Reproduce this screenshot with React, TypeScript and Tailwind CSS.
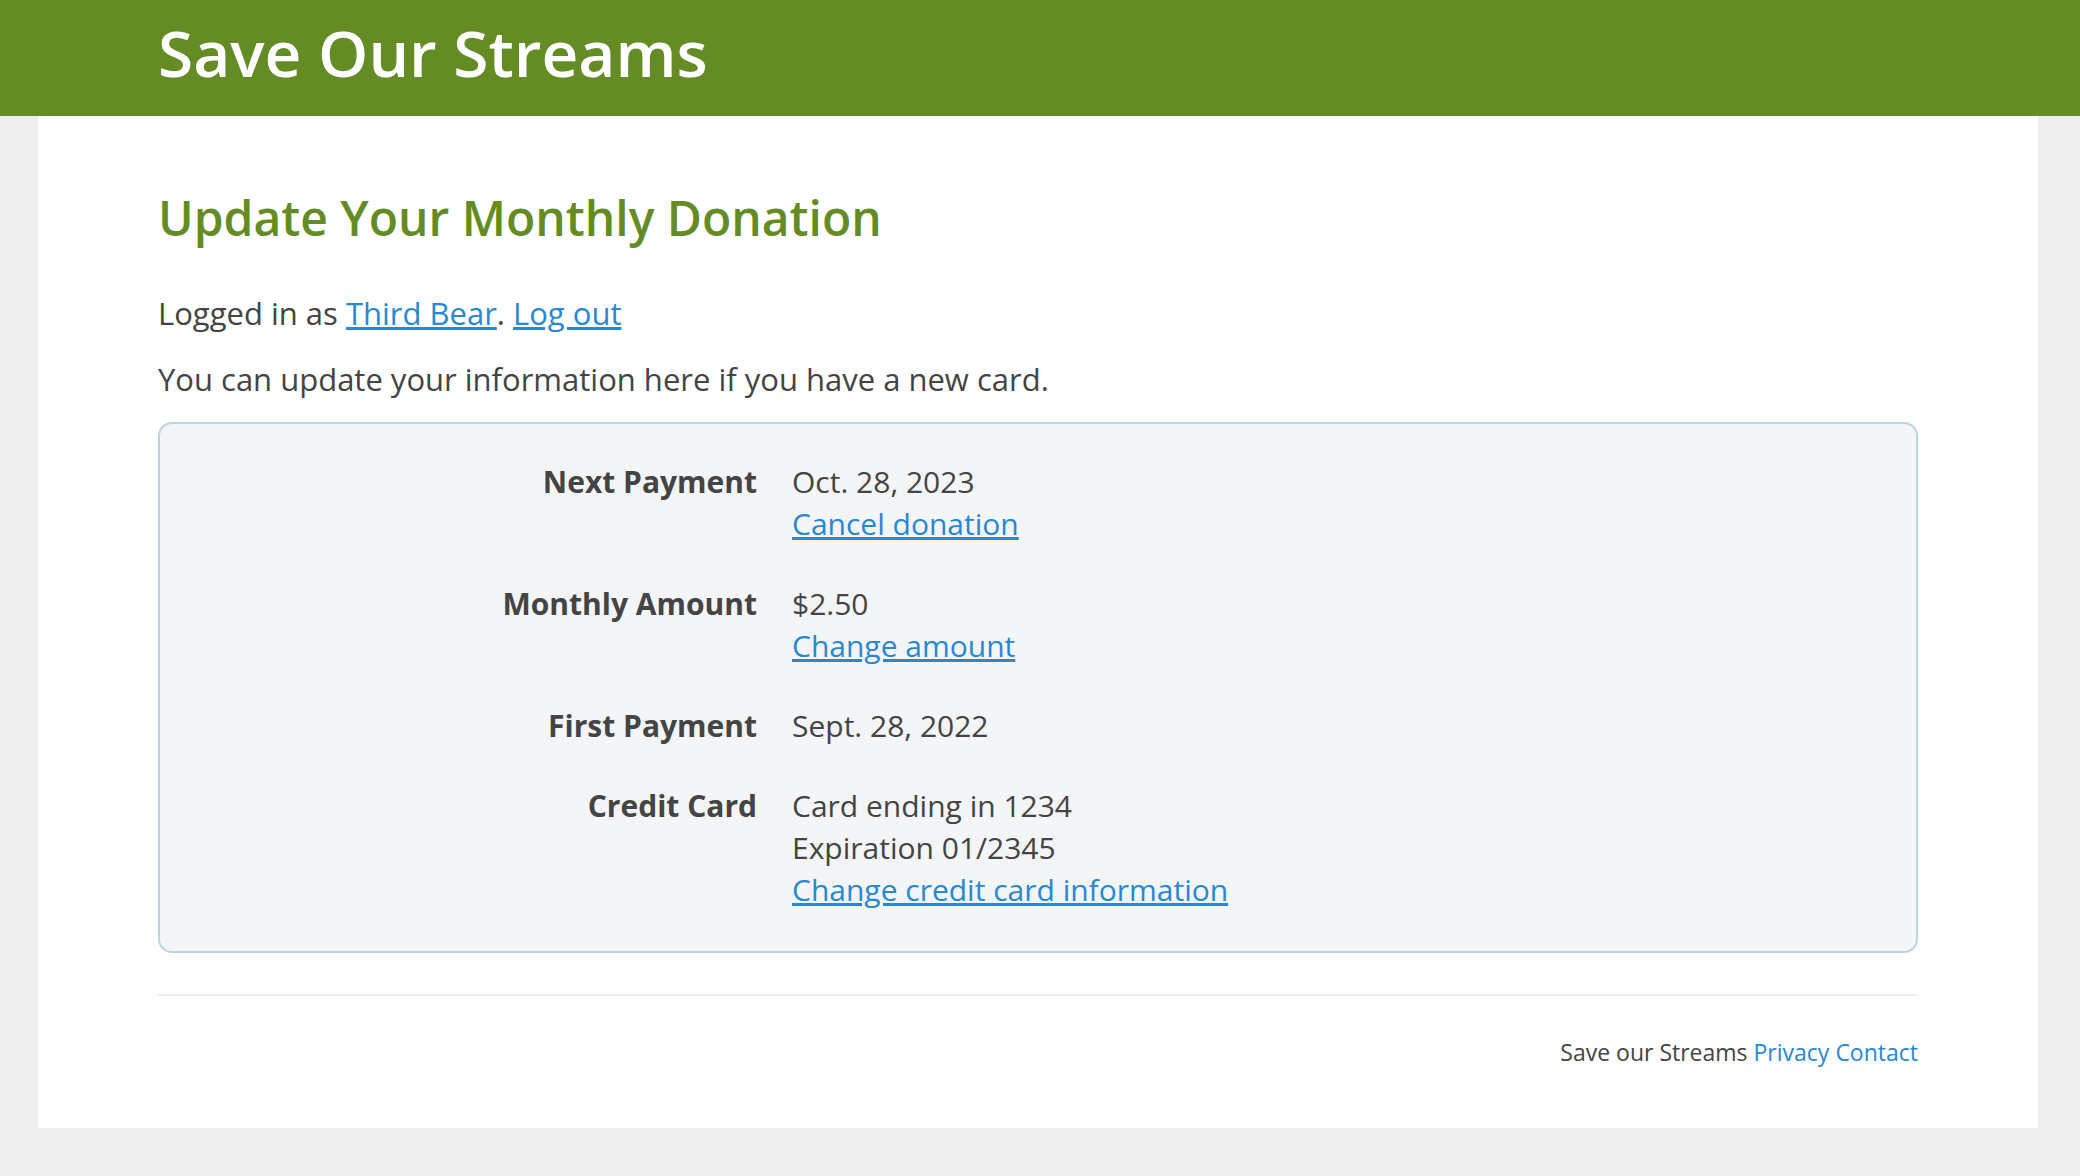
import React from "react";

const rows: { label: string; lines: { text: string; link?: boolean }[] }[] = [
  { label: "Next Payment", lines: [{ text: "Oct. 28, 2023" }, { text: "Cancel donation", link: true }] },
  { label: "Monthly Amount", lines: [{ text: "$2.50" }, { text: "Change amount", link: true }] },
  { label: "First Payment", lines: [{ text: "Sept. 28, 2022" }] },
  {
    label: "Credit Card",
    lines: [
      { text: "Card ending in 1234" },
      { text: "Expiration 01/2345" },
      { text: "Change credit card information", link: true },
    ],
  },
];

export default function App() {
  return (
    <div className="min-h-[1176px] bg-[#eeeeee] text-[#444444]" style={{ fontFamily: '"Open Sans", "Noto Sans", sans-serif' }}>
      <header className="h-[116px] bg-[#658b25] flex items-center">
        <h1 className="ml-[158px] -mt-[10px] text-[64px] leading-none font-semibold text-white">Save Our Streams</h1>
      </header>
      <main className="ml-[38px] w-[2000px] bg-white px-[120px] pt-[73px] pb-[59px]">
        <h2 className="text-[48px] leading-[1.2] font-semibold text-[#658b25]">Update Your Monthly Donation</h2>
        <p className="mt-[45px] text-[31px] leading-[42px]">
          Logged in as <a href="#" className="text-[#2a88d0] underline">Third Bear</a>.{" "}
          <a href="#" className="text-[#2a88d0] underline">Log out</a>
        </p>
        <p className="mt-[24px] text-[31px] leading-[42px]">You can update your information here if you have a new card.</p>
        <div className="mt-[22px] rounded-[14px] border-2 border-[#bcd5dc] bg-[#f3f5f7] pt-[37px] pb-[40px] flex flex-col gap-[38px]">
          {rows.map((r) => (
            <div key={r.label} className="flex text-[30px] leading-[42px]">
              <div className="w-[597px] shrink-0 text-right font-bold">{r.label}</div>
              <div className="pl-[35px] flex flex-col">
                {r.lines.map((l) =>
                  l.link ? (
                    <a key={l.text} href="#" className="text-[#2a88d0] underline self-start">
                      {l.text}
                    </a>
                  ) : (
                    <span key={l.text}>{l.text}</span>
                  )
                )}
              </div>
            </div>
          ))}
        </div>
        <hr className="mt-[41px] border-0 h-[2px] bg-[#eeeeee]" />
        <div className="mt-[40px] text-right text-[23px] leading-[33px]">
          Save our Streams <a href="#" className="text-[#2a88d0]">Privacy</a>{" "}
          <a href="#" className="text-[#2a88d0]">Contact</a>
        </div>
      </main>
    </div>
  );
}
